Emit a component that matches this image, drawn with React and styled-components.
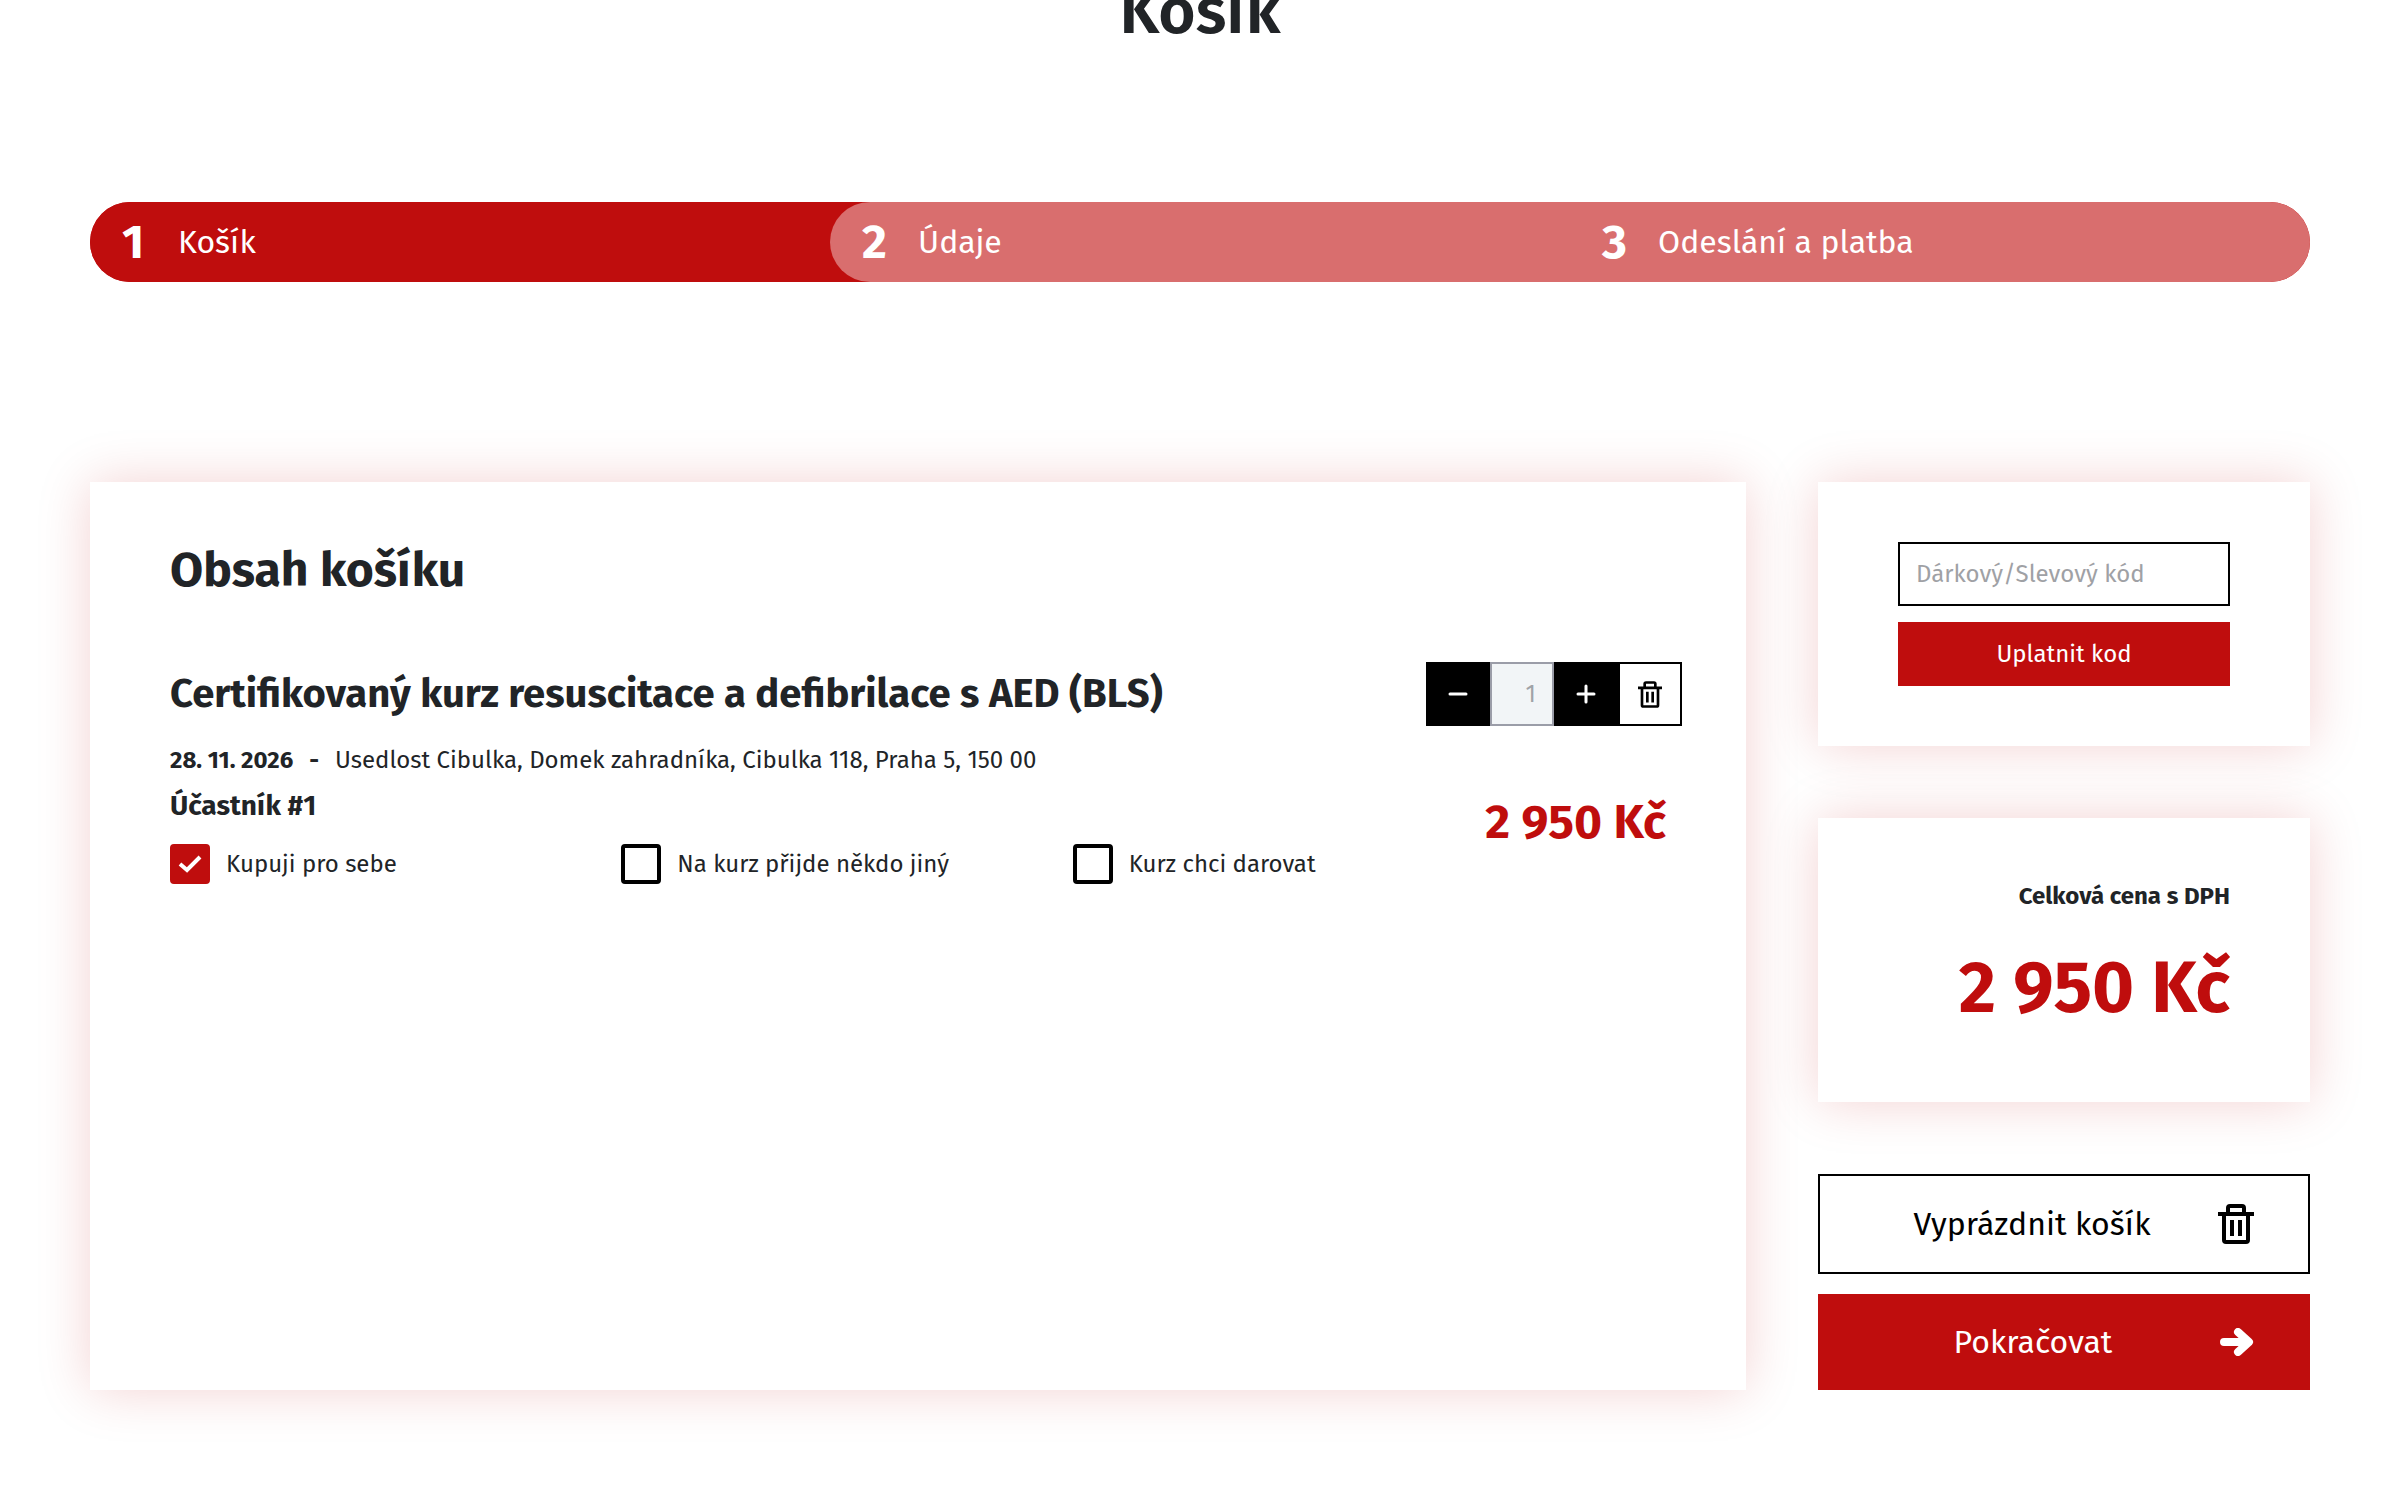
import { useState } from "react";
import styled, { createGlobalStyle } from "styled-components";

const GlobalStyle = createGlobalStyle`
  * {
    box-sizing: border-box;
  }
  body {
    margin: 0;
    background: #fff;
    color: #212427;
    font-family: "Fira Sans", "Noto Sans", "Open Sans", sans-serif;
    font-size: 24px;
    line-height: 36px;
  }
  h1, h2, h3, h4, p {
    margin: 0;
  }
  button, input {
    font-family: inherit;
    border-radius: 0;
    margin: 0;
  }
  button {
    cursor: pointer;
  }
`;

const STEPS = ["Košík", "Údaje", "Odeslání a platba"];
const OPTIONS = ["Kupuji pro sebe", "Na kurz přijde někdo jiný", "Kurz chci darovat"];
const PRICE = 2950;

const formatPrice = (value) =>
  `${String(value).replace(/\B(?=(\d{3})+$)/g, "\u00a0")} Kč`;

const TrashIcon = ({ width, height }) => (
  <svg width={width} height={height} viewBox="0 0 36 40" fill="none" stroke="currentColor" strokeWidth="4" aria-hidden="true">
    <path d="M0 10h36M10 10V4q0-2 2-2h12q2 0 2 2v6M6 10v26q0 2 2 2h20q2 0 2-2V10M14 16v16M22 16v16" />
  </svg>
);

const ArrowIcon = () => (
  <svg width="34" height="28" viewBox="0 0 34 28" fill="none" stroke="#fff" strokeWidth="8" strokeLinecap="round" strokeLinejoin="round" aria-hidden="true">
    <path d="M4 14h24M18 4l11 10-11 10" />
  </svg>
);

const CheckIcon = () => (
  <svg width="24" height="18" viewBox="0 0 24 18" fill="none" stroke="#fff" strokeWidth="4" aria-hidden="true">
    <path d="M2 9l7 6L22 2" />
  </svg>
);

const App = () => {
  const [count, setCount] = useState(1);
  const [option, setOption] = useState(0);

  return (
    <Page>
      <GlobalStyle />
      <Title>Košík</Title>

      <Steps>
        {STEPS.map((name, i) => (
          <Step key={name} $next={i > 0} $first={i === 1}>
            <StepNumber>{i + 1}</StepNumber>
            {name}
          </Step>
        ))}
      </Steps>

      <Columns>
        <Cart>
          <h2>Obsah košíku</h2>
          <Item>
            <ItemInfo>
              <h3>Certifikovaný kurz resuscitace a defibrilace s AED (BLS)</h3>
              <Place>
                <b>28. 11. 2026</b>
                <b>-</b>
                <span>Usedlost Cibulka, Domek zahradníka, Cibulka 118, Praha 5, 150 00</span>
              </Place>
              <h4>Účastník #1</h4>
              <Options>
                {OPTIONS.map((name, i) => (
                  <Option key={name}>
                    <CheckBox>
                      <input type="checkbox" checked={option === i} onChange={() => setOption(i)} />
                      {option === i && <CheckIcon />}
                    </CheckBox>
                    {name}
                  </Option>
                ))}
              </Options>
            </ItemInfo>
            <ItemSide>
              <Counter>
                <CountButton aria-label="Ubrat" onClick={() => setCount(Math.max(1, count - 1))}>
                  <svg width="20" height="20" viewBox="0 0 20 20" stroke="#fff" strokeWidth="3" strokeLinecap="round">
                    <path d="M2 10h16" />
                  </svg>
                </CountButton>
                <CountInput aria-label="Počet" value={count} disabled />
                <CountButton aria-label="Přidat" onClick={() => setCount(count + 1)}>
                  <svg width="20" height="20" viewBox="0 0 20 20" stroke="#fff" strokeWidth="3" strokeLinecap="round">
                    <path d="M2 10h16M10 2v16" />
                  </svg>
                </CountButton>
                <CountButton $light aria-label="Odstranit">
                  <TrashIcon width={24} height={27} />
                </CountButton>
              </Counter>
              <ItemPrice>{formatPrice(PRICE * count)}</ItemPrice>
            </ItemSide>
          </Item>
        </Cart>

        <Side>
          <CodeForm onSubmit={(e) => e.preventDefault()}>
            <CodeInput type="text" aria-label="Dárkový/Slevový kód" placeholder="Dárkový/Slevový kód" />
            <CodeButton type="submit">Uplatnit kod</CodeButton>
          </CodeForm>
          <Total>
            <TotalLabel>Celková cena s DPH</TotalLabel>
            <TotalPrice>{formatPrice(PRICE * count)}</TotalPrice>
          </Total>
          <Actions>
            <EmptyButton>
              <span>Vyprázdnit košík</span>
              <TrashIcon width={36} height={40} />
            </EmptyButton>
            <NextButton>
              <span>Pokračovat</span>
              <ArrowIcon />
            </NextButton>
          </Actions>
        </Side>
      </Columns>
    </Page>
  );
};

export default App;

const Page = styled.main`
  padding: 0 90px 110px;
  display: flow-root;
`;

/* the heading is partly scrolled out at the top */
const Title = styled.h1`
  margin-top: -24px;
  font-size: 64px;
  line-height: 72px;
  font-weight: 600;
  text-align: center;
`;

const Steps = styled.ol`
  list-style: none;
  margin: 154px 0 200px;
  padding: 0;
  display: grid;
  grid-template-columns: repeat(3, 1fr);
  border-radius: 40px;
  overflow: hidden;
  background: #bf0d0d;
`;

const Step = styled.li`
  display: flex;
  align-items: center;
  height: 80px;
  padding-left: 32px;
  color: #fff;
  font-size: 32px;
  font-weight: 400;
  background: ${(props) => (props.$next ? "#d96e6e" : "#bf0d0d")};
  border-radius: ${(props) => (props.$first ? "40px 0 0 40px" : "0")};
`;

const StepNumber = styled.span`
  width: 56px;
  font-size: 48px;
  font-weight: 700;
`;

const Columns = styled.div`
  display: grid;
  grid-template-columns: minmax(0, 1fr) 492px;
  gap: 72px;
`;

const Card = styled.section`
  background: #fff;
  box-shadow: 0 0 50px rgba(191, 13, 13, 0.18);
`;

const Cart = styled(Card)`
  padding: 60px 64px 60px 80px;

  h2 {
    margin-bottom: 64px;
    font-size: 48px;
    line-height: 56px;
    font-weight: 700;
  }
`;

const Item = styled.div`
  display: flex;
`;

const ItemInfo = styled.div`
  flex: 1;

  h3 {
    margin-bottom: 16px;
    font-size: 40px;
    line-height: 64px;
    font-weight: 700;
  }
  h4 {
    margin: 10px 0 20px;
    font-size: 28px;
    line-height: 36px;
    font-weight: 700;
  }
`;

const Place = styled.p`
  display: flex;
  gap: 16px;

  b {
    font-weight: 700;
  }
`;

const Options = styled.div`
  display: grid;
  grid-template-columns: repeat(3, 1fr);
  gap: 98px;
`;

const Option = styled.label`
  display: flex;
  align-items: center;
  gap: 16px;
  white-space: nowrap;
`;

const CheckBox = styled.span`
  display: grid;
  place-items: center;

  > * {
    grid-area: 1 / 1;
  }
  input {
    appearance: none;
    width: 40px;
    height: 40px;
    border: 4px solid #000;
    border-radius: 4px;
  }
  input:checked {
    background: #bf0d0d;
    border-color: #bf0d0d;
  }
  svg {
    pointer-events: none;
  }
`;

const ItemSide = styled.div`
  display: flex;
  flex-direction: column;
  gap: 64px;
`;

const Counter = styled.div`
  display: flex;
`;

const CountButton = styled.button`
  display: flex;
  align-items: center;
  justify-content: center;
  width: 64px;
  height: 64px;
  padding: 0;
  border: 2px solid #000;
  color: #000;
  background: ${(props) => (props.$light ? "#fff" : "#000")};
`;

const CountInput = styled.input`
  width: 64px;
  height: 64px;
  padding: 0 16px;
  border: 2px solid #9b9da8;
  background: #f2f5f7;
  color: #a0a3a8;
  font-size: 24px;
  text-align: right;
`;

const ItemPrice = styled.p`
  padding-right: 16px;
  color: #bf0d0d;
  font-size: 48px;
  line-height: 64px;
  font-weight: 700;
  text-align: right;
`;

const Side = styled.aside`
  display: flex;
  flex-direction: column;
  gap: 72px;
`;

const CodeForm = styled(Card).attrs({ as: "form" })`
  display: flex;
  flex-direction: column;
  gap: 16px;
  padding: 60px 80px;
`;

const CodeInput = styled.input`
  width: 100%;
  height: 64px;
  padding: 0 16px;
  border: 2px solid #000;
  background: #fff;
  font-size: 24px;

  &::placeholder {
    color: #9fa1a5;
    opacity: 1;
  }
`;

const CodeButton = styled.button`
  height: 64px;
  border: 0;
  background: #bf0d0d;
  color: #fff;
  font-size: 24px;
  font-weight: 400;
`;

const Total = styled(Card)`
  padding: 60px 80px 70px;
  text-align: right;
`;

const TotalLabel = styled.p`
  margin-bottom: 30px;
  font-weight: 700;
`;

const TotalPrice = styled.p`
  color: #bf0d0d;
  font-size: 72px;
  line-height: 88px;
  font-weight: 700;
`;

const Actions = styled.div`
  display: flex;
  flex-direction: column;
  gap: 20px;
`;

const ActionButton = styled.button`
  display: flex;
  align-items: center;
  gap: 28px;
  padding: 0 56px;
  font-size: 32px;
  font-weight: 400;

  span {
    flex: 1;
    white-space: nowrap;
  }
`;

const EmptyButton = styled(ActionButton)`
  height: 100px;
  padding: 0 54px;
  border: 2px solid #000;
  background: #fff;
  color: #000;
`;

const NextButton = styled(ActionButton)`
  height: 96px;
  border: 0;
  background: #bf0d0d;
  color: #fff;
`;
